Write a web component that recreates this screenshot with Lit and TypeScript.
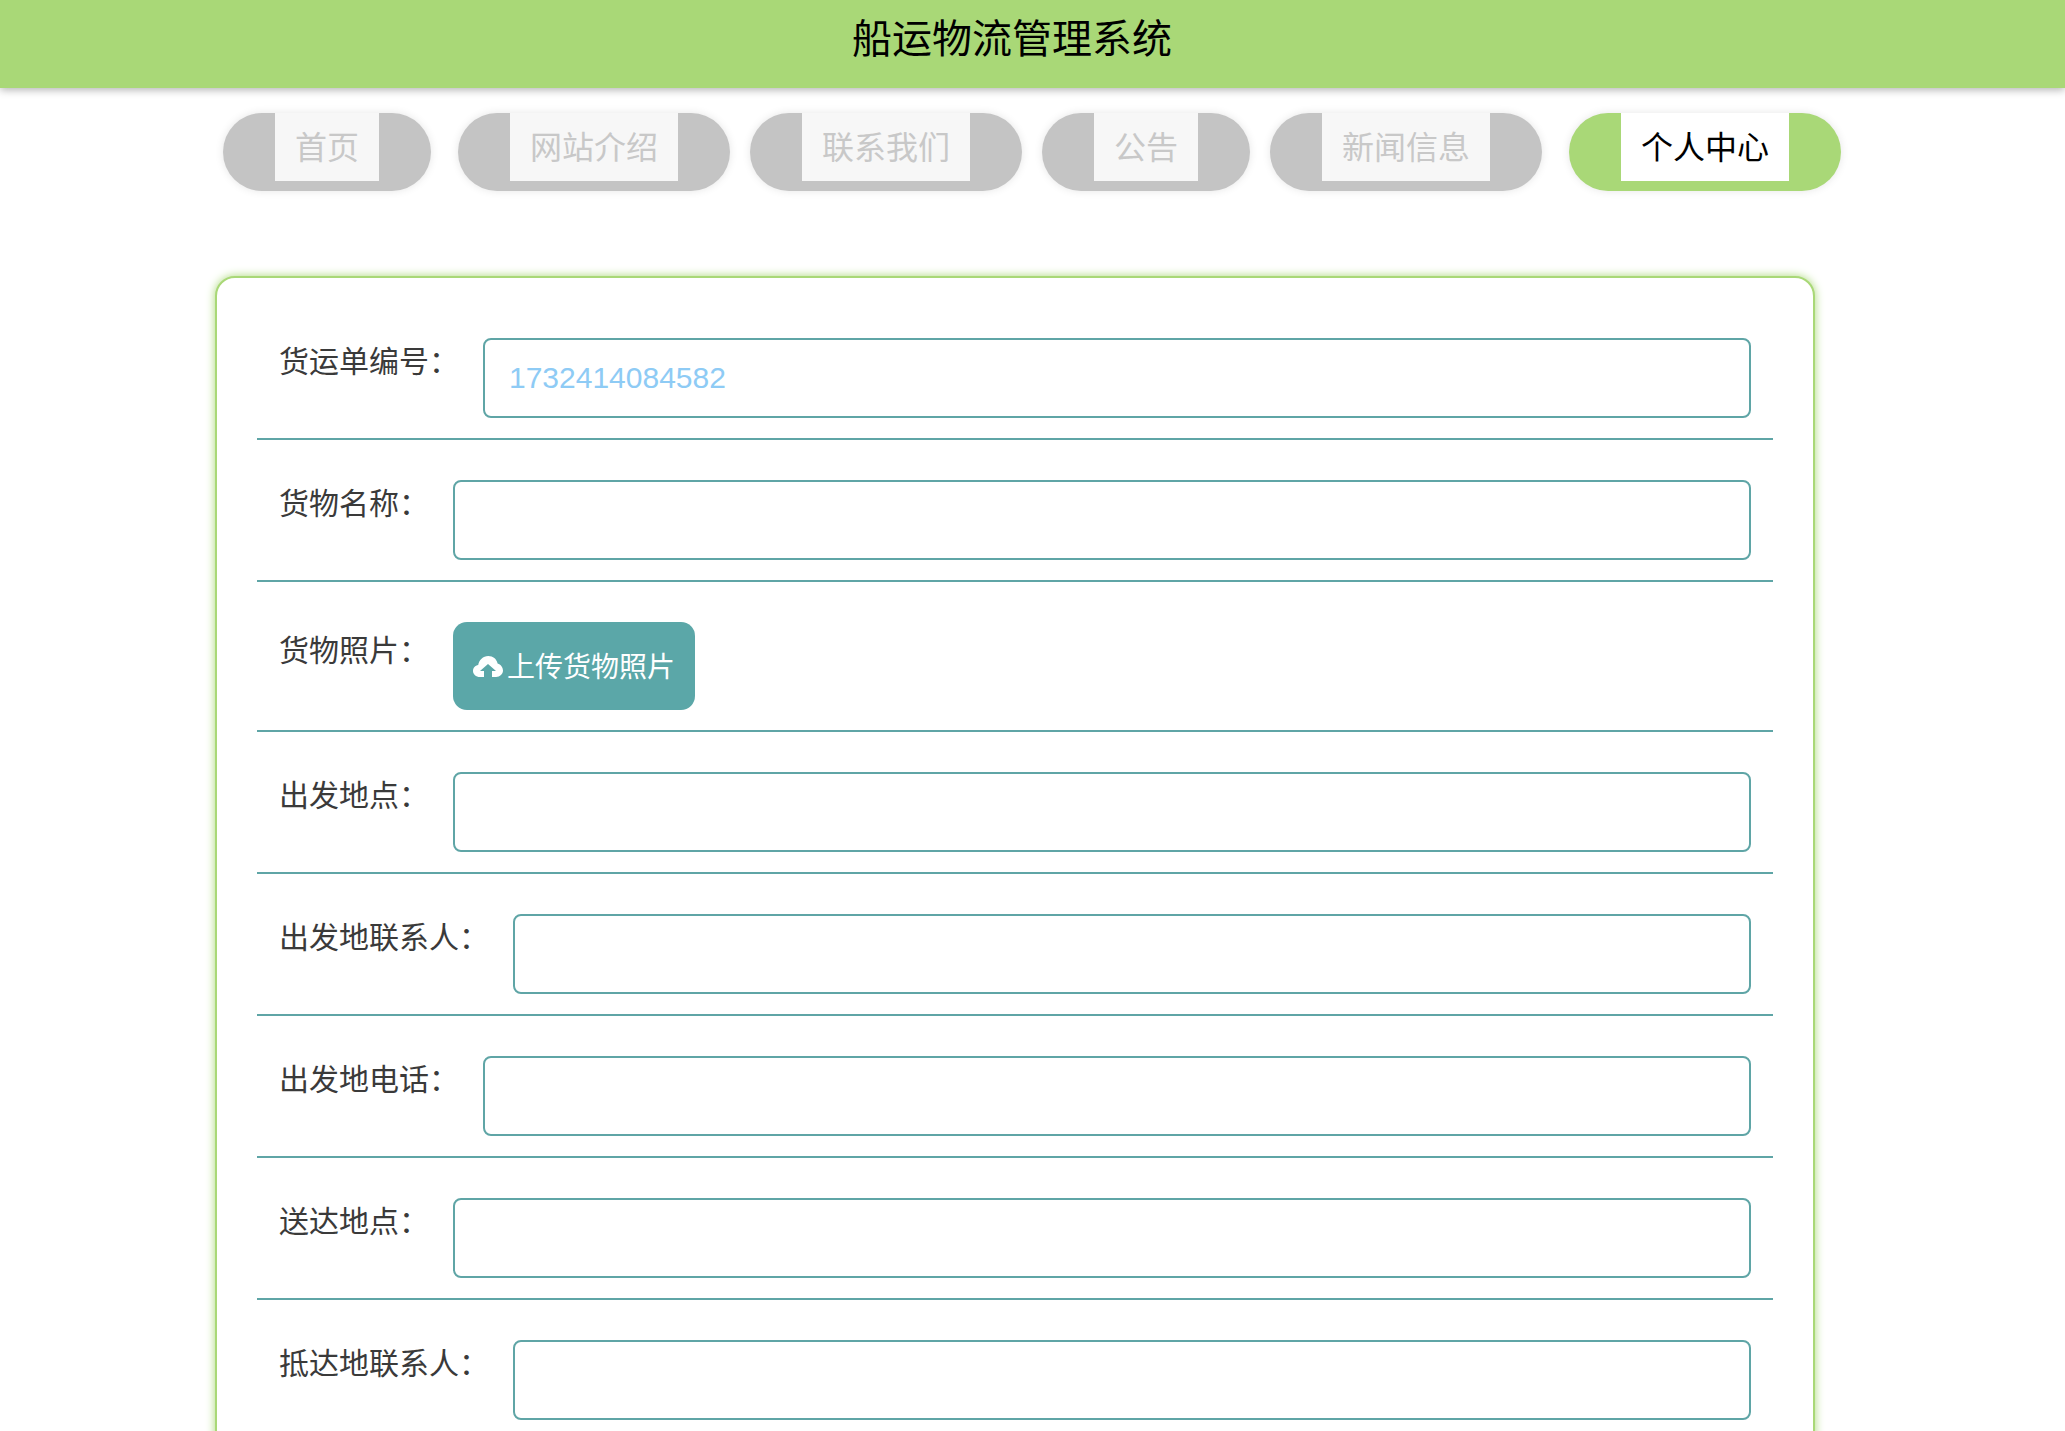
import { LitElement, html, css } from "lit";
import { customElement } from "lit/decorators.js";

const NAV = [
	{ text: "首页", wide: true },
	{ text: "网站介绍" },
	{ text: "联系我们" },
	{ text: "公告" },
	{ text: "新闻信息", wide: true },
	{ text: "个人中心", active: true },
];

const ROWS = [
	{ label: "货运单编号", value: "1732414084582" },
	{ label: "货物名称" },
	{ label: "货物照片", upload: "上传货物照片" },
	{ label: "出发地点" },
	{ label: "出发地联系人" },
	{ label: "出发地电话" },
	{ label: "送达地点" },
	{ label: "抵达地联系人" },
];

@customElement("app-root")
export class AppRoot extends LitElement {
	static styles = css`
		:host {
			display: block;
			font-family: "Liberation Sans", "Noto Sans CJK SC", sans-serif;
			background: #fff;
		}

		.header {
			height: 88px;
			box-sizing: border-box;
			background: #a9d877;
			box-shadow: 0 2px 8px rgba(0, 0, 0, 0.3);
			color: #000;
			font-size: 40px;
			line-height: 78px;
			text-align: center;
			padding-right: 41px;
		}

		.nav {
			display: flex;
			justify-content: center;
			gap: 20px;
			padding: 25px 1px 0 0;
		}

		.pill {
			height: 78px;
			box-sizing: border-box;
			padding: 0 52px 10px;
			border-radius: 40px;
			background: #c4c4c4;
			box-shadow: 0 0 8px rgba(0, 0, 0, 0.1);
		}

		.pill.wide {
			margin-right: 7px;
		}

		.pill span {
			display: block;
			height: 68px;
			padding: 0 20px;
			background: #f7f7f7;
			color: #c8c8c8;
			font-size: 32px;
			line-height: 70px;
			white-space: nowrap;
		}

		.pill.active {
			background: #a9d877;
		}

		.pill.active span {
			background: #fff;
			color: #000;
		}

		.card {
			box-sizing: border-box;
			width: 1600px;
			margin: 85px 0 0 215px;
			padding: 60px 40px;
			border: 2px solid #a9d877;
			border-radius: 20px;
			box-shadow: 0 0 10px #a9d877;
			background: #fff;
		}

		.row {
			display: flex;
			align-items: flex-start;
			padding: 0 22px 20px;
			margin-bottom: 40px;
			border-bottom: 2px solid #5fa5a6;
		}

		.label {
			flex: none;
			margin-right: 24px;
			color: #3a3a3a;
			font-size: 30px;
			line-height: 48px;
			white-space: nowrap;
		}

		.row.has-upload .label {
			padding-top: 5px;
		}

		input {
			flex: 1;
			min-width: 0;
			height: 80px;
			box-sizing: border-box;
			padding: 0 24px;
			border: 2px solid #5fa5a6;
			border-radius: 8px;
			outline: none;
			background: #fff;
			color: #8ecbf5;
			font: 30px "Liberation Sans", sans-serif;
		}

		.upload {
			display: flex;
			align-items: center;
			gap: 4px;
			height: 88px;
			box-sizing: border-box;
			padding: 0 20px 2px;
			border: none;
			border-radius: 14px;
			background: #5ba7a8;
			color: #fff;
			font-family: inherit;
			font-size: 28px;
		}

		.upload svg {
			width: 30px;
			height: 21px;
			fill: #fff;
			margin-top: 2px;
		}
	`;

	render() {
		return html`
			<div class="header">船运物流管理系统</div>
			<div class="nav">
				${NAV.map(
					(n) => html`
						<div class="pill ${n.wide ? "wide" : ""} ${n.active ? "active" : ""}">
							<span>${n.text}</span>
						</div>
					`
				)}
			</div>
			<div class="card">
				${ROWS.map(
					(r) => html`
						<div class="row ${r.upload ? "has-upload" : ""}">
							<div class="label">${r.label}：</div>
							${r.upload
								? html`<button class="upload">
										<svg viewBox="0 0 30 21">
											<path
												d="M7 21C3 21 0 18.3 0 15C0 12 2.2 9.6 5.2 9.1C6 4 10 0 15.3 0C20 0 23.6 3 24.6 7.4C27.8 8.3 30 11.2 30 14.5C30 18 27 21 23 21H19V15H23L15 8L7 15H11V21Z"
											/>
										</svg>
										${r.upload}
									</button>`
								: html`<input .value=${r.value ?? ""} />`}
						</div>
					`
				)}
			</div>
		`;
	}
}
